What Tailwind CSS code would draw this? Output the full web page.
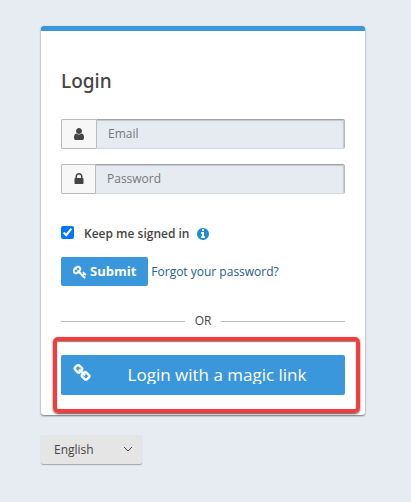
<!DOCTYPE html>
<html lang="en">
<head>
  <meta charset="UTF-8" />
  <meta name="viewport" content="width=device-width, initial-scale=1" />
  <title>Login</title>
  <script src="https://cdn.jsdelivr.net/npm/@tailwindcss/browser@4"></script>
</head>
<body class="bg-[#e7ebf2] min-h-screen pl-[41px] pr-[46px] pt-[26px] pb-8 font-['Open_Sans','Noto_Sans',sans-serif] text-xs text-[#444]">
  <main class="max-w-md">
    <form class="bg-white border-t-[5px] border-[#3a97dc] rounded-[3px] px-5 pt-9 pb-5 shadow-[0_1px_2px_rgba(0,0,0,0.5)]">
      <h1 class="font-['Noto_Sans',sans-serif] text-[19px] leading-7 font-medium mb-6">Login</h1>

      <div class="flex h-[30px] mb-[15px]">
        <label for="email" class="w-[35px] shrink-0 flex items-center justify-center bg-[#f7f7f7] border border-r-0 border-[#bbb] rounded-l-[2px]">
          <svg class="size-[14px]" viewBox="0 0 1792 1792" fill="currentColor" role="img" aria-label="Email"><path d="M1536 1399q0 109-62.5 187t-150.5 78h-854q-88 0-150.5-78t-62.5-187q0-85 8.5-160.5t31.5-152 58.5-131 94-89 134.5-34.5q131 128 313 128t313-128q76 0 134.5 34.5t94 89 58.5 131 31.5 152 8.5 160.5zm-256-887q0 159-112.5 271.5t-271.5 112.5-271.5-112.5-112.5-271.5 112.5-271.5 271.5-112.5 271.5 112.5 112.5 271.5z"/></svg>
        </label>
        <input id="email" type="email" placeholder="Email" class="flex-1 min-w-0 px-[11px] bg-[#e6ebf2] border border-t-[#a0a4a9] border-r-[#b5b9be] border-b-[#d5d9df] border-l-[#bbb] rounded-r-[2px] shadow-[inset_-1px_1px_1px_rgba(0,0,0,0.15)] placeholder:text-[#777]" />
      </div>

      <div class="flex h-[30px] mb-[30px]">
        <label for="password" class="w-[34px] shrink-0 flex items-center justify-center bg-[#f7f7f7] border border-r-0 border-[#bbb] rounded-l-[2px]">
          <svg class="size-[14px]" viewBox="0 0 1792 1792" fill="currentColor" role="img" aria-label="Password"><path d="M640 768h512v-192q0-106-75-181t-181-75-181 75-75 181v192zm832 96v576q0 40-28 68t-68 28h-960q-40 0-68-28t-28-68v-576q0-40 28-68t68-28h32v-192q0-184 132-316t316-132 316 132 132 316v192h32q40 0 68 28t28 68z"/></svg>
        </label>
        <input id="password" type="password" placeholder="Password" class="flex-1 min-w-0 px-[11px] bg-[#e6ebf2] border border-t-[#a0a4a9] border-r-[#b5b9be] border-b-[#d5d9df] border-l-[#bbb] rounded-r-[2px] shadow-[inset_-1px_1px_1px_rgba(0,0,0,0.15)] placeholder:text-[#777]" />
      </div>

      <div class="flex items-center h-5 mb-[13px]">
        <input id="remember" type="checkbox" checked class="size-[13px] mr-[10px] mb-1" />
        <label for="remember" class="font-semibold">Keep me signed in</label>
        <svg class="size-[14px] ml-[6px] text-[#1f8dd6]" viewBox="0 0 1792 1792" fill="currentColor"><path d="M1152 1376v-160q0-14-9-23t-23-9h-96v-512q0-14-9-23t-23-9h-320q-14 0-23 9t-9 23v160q0 14 9 23t23 9h96v320h-96q-14 0-23 9t-9 23v160q0 14 9 23t23 9h448q14 0 23-9t9-23zm-128-896v-160q0-14-9-23t-23-9h-192q-14 0-23 9t-9 23v160q0 14 9 23t23 9h192q14 0 23-9t9-23zm640 416q0 209-103 385.5t-279.5 279.5-385.5 103-385.5-103-279.5-279.5-103-385.5 103-385.5 279.5-279.5 385.5-103 385.5 103 279.5 279.5 103 385.5z"/></svg>
      </div>

      <div class="flex items-center gap-[3px] mb-[25px]">
        <button type="submit" class="flex items-center gap-[3px] h-[29px] px-3 rounded-[2px] bg-[#3a97dc] text-white text-[13px] font-bold">
          <svg class="size-[14px]" viewBox="0 0 1792 1792" fill="currentColor"><path d="M832 512q0-80-56-136t-136-56-136 56-56 136q0 42 19 83-41-19-83-19-80 0-136 56t-56 136 56 136 136 56 136-56 56-136q0-42-19-83 41 19 83 19 80 0 136-56t56-136zm851 704q0 17-49 66t-66 49q-9 0-28.5-16t-36.5-33-38.5-40-24.5-26l-96 96 220 220q28 28 28 68 0 42-39 81t-81 39q-40 0-68-28l-671-671q-176 131-365 131-163 0-265.5-102.5t-102.5-265.5q0-160 95-313t248-248 313-95q163 0 265.5 102.5t102.5 265.5q0 189-131 365l355 355 96-96q-3-3-26-24.5t-40-38.5-33-36.5-16-28.5q0-17 49-66t66-49q13 0 23 10 6 6 46 44.5t82 79.5 86.5 86 73 78 28.5 41z" stroke="currentColor" stroke-width="60"/></svg>
          Submit
        </button>
        <a href="#" class="text-[#20608f]">Forgot your password?</a>
      </div>

      <div class="flex items-center gap-[10px] h-5 mb-6">
        <span class="flex-1 h-px bg-[#bbb]"></span>
        <span>OR</span>
        <span class="flex-1 h-px bg-[#bbb]"></span>
      </div>

      <div class="relative">
        <button type="button" class="flex items-center w-full h-10 px-3 rounded-[2px] bg-[#3a97dc] text-white">
          <svg class="size-[18px] shrink-0 mb-1" viewBox="0 0 1792 1792" fill="currentColor" stroke="currentColor" stroke-width="70"><path d="M1520 1216q0-40-28-68l-208-208q-28-28-68-28-42 0-72 32 3 3 19 18.5t21.5 21.5 15 19 13 25.5 3.5 27.5q0 40-28 68t-68 28q-15 0-27.5-3.5t-25.5-13-19-15-21.5-21.5-18.5-19q-33 31-33 73 0 40 28 68l206 207q27 27 68 27 40 0 68-26l147-146q28-28 28-67zm-703-705q0-40-28-68l-206-207q-28-28-68-28-39 0-68 27l-147 146q-28 28-28 67 0 40 28 68l208 208q27 27 68 27 42 0 72-31-3-3-19-18.5t-21.5-21.5-15-19-13-25.5-3.5-27.5q0-40 28-68t68-28q15 0 27.5 3.5t25.5 13 19 15 21.5 21.5 18.5 19q33-31 33-73zm895 705q0 120-85 203l-147 146q-83 83-203 83-121 0-204-85l-206-207q-83-83-83-203 0-123 88-209l-88-88q-86 88-208 88-120 0-204-84l-208-208q-84-84-84-204t85-203l147-146q83-83 203-83 121 0 204 85l206 207q83 83 83 203 0 123-88 209l88 88q86-88 208-88 120 0 204 84l208 208q84 84 84 204z"/></svg>
          <span class="flex-1 pl-[10px] text-[17px] leading-[18px] overflow-hidden">Login with a magic link</span>
        </button>
        <!-- highlight around the magic link button -->
        <div class="absolute -inset-y-[18px] -left-2 -right-[15px] border-4 border-[#f43b3d] rounded-[5px] shadow-[0_1px_2px_rgba(0,0,0,0.7),inset_0_1px_1px_rgba(0,0,0,0.5)] pointer-events-none"></div>
      </div>
    </form>

    <div class="relative inline-block mt-5">
      <select aria-label="Language" class="appearance-none block w-[101px] h-[29px] pl-[13px] pr-7 bg-[#e5e5e5] rounded-[2px] shadow-[0_1px_1px_rgba(0,0,0,0.3)]">
        <option>English</option>
      </select>
      <svg class="absolute right-[10px] top-[10px] size-2 pointer-events-none" viewBox="0 0 8 8" fill="none" stroke="currentColor"><path d="M0 2l4 4 4-4"/></svg>
    </div>
  </main>
</body>
</html>
